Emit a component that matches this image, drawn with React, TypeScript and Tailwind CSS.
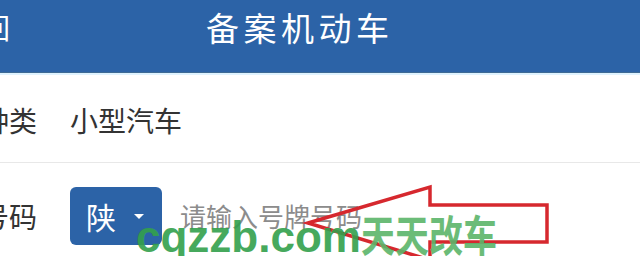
export default function App() {
  const cjk = { fontFamily: '"Noto Sans CJK SC", "Noto Sans", sans-serif' };
  return (
    <div className="relative w-[640px] h-[256px] overflow-hidden bg-white" style={cjk}>
      <div className="flex items-center h-[73px] pb-[18px] bg-[#2c63a7] border-b border-[#3f6a94] text-white">
        <span className="ml-[-46px] w-[56px] text-[28px] leading-none whitespace-nowrap">返回</span>
        <span className="ml-[196px] text-[33px] leading-none tracking-[4.5px] whitespace-nowrap">备案机动车</span>
      </div>
      <div className="h-[2px] bg-[#dff3ff]" />
      <div className="flex items-center h-[88px] pt-[3px] border-b border-[#e8e8e8] text-[#333333] text-[28px] leading-none">
        <span className="ml-[-75px] w-[112px] whitespace-nowrap">车辆种类</span>
        <span className="ml-[33px] whitespace-nowrap">小型汽车</span>
      </div>
      <div className="flex items-center pt-[24px] text-[28px] leading-none">
        <span className="ml-[-75px] w-[112px] whitespace-nowrap text-[#333333]">号牌号码</span>
        <div className="ml-[33px] w-[92px] h-[58px] rounded-[6px] bg-[#2c63a7] flex items-center pl-[16px] text-white">
          <span className="text-[30px]">陕</span>
          <svg width="10" height="6" viewBox="0 0 10 6" className="ml-[18px] mt-[2px]">
            <path d="M0 0 L10 0 L5 5 Z" fill="#ffffff" />
          </svg>
        </div>
        <span className="ml-[18px] text-[26px] text-[#8c8c8c] whitespace-nowrap">请输入号牌号码</span>
      </div>

      <svg className="absolute left-0 top-0" width="640" height="256" viewBox="0 0 640 256">
        <polygon
          points="308,223 430,187 430,205 547,205 547,242 430,242 430,260"
          fill="none"
          stroke="#d6282e"
          strokeWidth="3.5"
          strokeLinejoin="miter"
        />
      </svg>

      <div className="absolute left-[136px] top-[212px] whitespace-nowrap leading-none flex items-baseline">
        <span
          className="text-[44px] font-bold text-[#33a04c] opacity-90"
          style={{ fontFamily: '"Liberation Sans", Arial, sans-serif' }}
        >
          cqzzb.com
        </span>
        <span className="inline-block origin-left scale-x-[0.79] text-[43px] font-bold text-[#5bb56a] opacity-90">
          天天改车
        </span>
      </div>
    </div>
  );
}
